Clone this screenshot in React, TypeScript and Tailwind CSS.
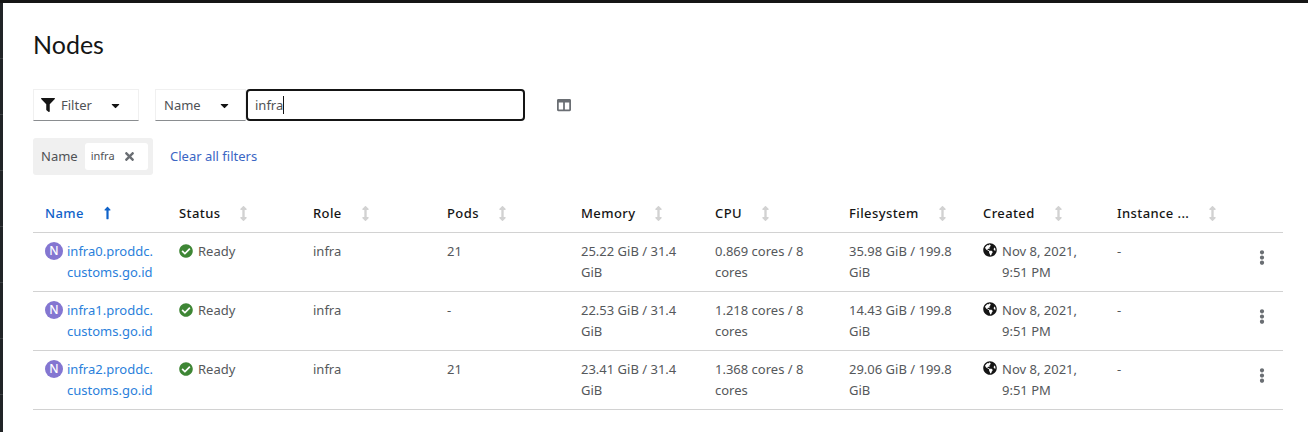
import React from "react";
import { FaFilter, FaCaretDown, FaTimes, FaLongArrowAltUp, FaCheckCircle, FaGlobeAmericas, FaEllipsisV, FaArrowsAltV, FaColumns } from "react-icons/fa";

const columns = ["Status", "Role", "Pods", "Memory", "CPU", "Filesystem", "Created", "Instance ..."];

const nodes = [
  { name: "infra0.proddc.", pods: "21", memory: "25.22 GiB / 31.4 GiB", cpu: "0.869 cores / 8 cores", fs: "35.98 GiB / 199.8 GiB" },
  { name: "infra1.proddc.", pods: "-", memory: "22.53 GiB / 31.4 GiB", cpu: "1.218 cores / 8 cores", fs: "14.43 GiB / 199.8 GiB" },
  { name: "infra2.proddc.", pods: "21", memory: "23.41 GiB / 31.4 GiB", cpu: "1.368 cores / 8 cores", fs: "29.06 GiB / 199.8 GiB" },
];

const navItems = [1, 2, 3, 4, 5, 6, 7, 8];

const App: React.FC = () => {
  return (
    <div className="flex flex-col w-[1308px] h-[432px] overflow-hidden bg-[#151515] font-['Noto_Sans',sans-serif]">
      <div className="h-[3px] shrink-0 bg-[#151515]" />
      <div className="flex flex-1 min-h-0">
        {/* sliver of the collapsed side nav */}
        <div className="w-[3px] shrink-0 bg-[#212427]">
          {navItems.map((i) => (
            <div key={i} className="h-[56px] border-b border-[#3c3f42]" />
          ))}
        </div>
        <div className="flex-1 bg-white pl-[30px] pr-[25px] text-[13px] text-[#151515]">
          <h1 className="pt-[23px] h-[67px] text-[25px] leading-[36px] font-['Lato',sans-serif]">Nodes</h1>

          <div className="mt-[19px] flex items-center h-[32px]">
            <div className="flex items-center w-[106px] h-[32px] border border-[#f0f0f0] border-b-[#8a8d90] pl-[7px]">
              <FaFilter className="w-[14px] h-[14px] mr-[6px]" />
              <span className="pt-[2px] text-[#4f5255]">Filter</span>
              <FaCaretDown className="ml-[17px] w-[13px] h-[13px]" />
            </div>
            <div className="ml-[16px] flex items-center w-[91px] h-[32px] border border-[#f0f0f0] border-b-[#8a8d90] pl-[8px]">
              <span className="pt-[2px] text-[#4f5255]">Name</span>
              <FaCaretDown className="ml-[17px] w-[13px] h-[13px]" />
            </div>
            <div className="flex items-center w-[279px] h-[32px] border-2 border-[#151515] rounded-[4px] pl-[7px]">
              <span className="pt-[2px] text-[#4f5255]">infra</span>
              <span className="w-px h-[18px] bg-[#151515]" />
            </div>
            <FaColumns className="ml-[32px] w-[14px] h-[14px] text-[#6a6e73]" />
          </div>

          <div className="mt-[17px] flex items-center h-[37px]">
            <div className="flex items-center h-[37px] w-[120px] rounded-[3px] bg-[#f0f0f0] pl-[8px]">
              <span className="text-[#4f5255]">Name</span>
              <div className="ml-[7px] flex items-center h-[27px] w-[63px] rounded-[3px] bg-white pl-[6px]">
                <span className="text-[11px] text-[#4f5255]">infra</span>
                <FaTimes className="ml-[8px] w-[13px] h-[13px] text-[#6a6e73]" />
              </div>
            </div>
            <a className="ml-[17px] text-[#3b66c4]">Clear all filters</a>
          </div>

          <table className="mt-[18px] w-[1250px] table-fixed border-collapse">
            <thead>
              <tr className="h-[39px] border-b border-[#d2d2d2]">
                <th className="w-[134px] pl-[12px] pt-[2px] text-left font-medium tracking-[0.4px] text-[#0f62c9]">
                  <span className="inline-flex items-center">
                    Name
                    <FaLongArrowAltUp className="ml-[17px] w-[13px] h-[14px]" />
                  </span>
                </th>
                {columns.map((c) => (
                  <th key={c} className="w-[134px] pl-[12px] pt-[2px] text-left font-medium tracking-[0.4px]">
                    <span className="inline-flex items-center">
                      {c}
                      <FaArrowsAltV className="ml-[17px] w-[13px] h-[15px] text-[#d2d2d2]" />
                    </span>
                  </th>
                ))}
                <th />
              </tr>
            </thead>
            <tbody>
              {nodes.map((n) => (
                <tr key={n.name} className="h-[59px] border-b border-[#d2d2d2] align-top text-[#55585b] leading-[21px]">
                  <td className="pl-[12px] pt-[8px]">
                    <div className="flex">
                      <span className="mt-[1px] flex items-center justify-center shrink-0 w-[18px] h-[18px] rounded-full bg-[#8476d1] text-white text-[12px] font-medium">N</span>
                      <a className="ml-[4px] text-[#2b7fdb]">{n.name}<br />customs.go.id</a>
                    </div>
                  </td>
                  <td className="pl-[12px] pt-[8px]">
                    <div className="flex items-center">
                      <FaCheckCircle className="w-[14px] h-[14px] text-[#3e8635] mr-[5px]" />
                      Ready
                    </div>
                  </td>
                  <td className="pl-[12px] pt-[8px]">infra</td>
                  <td className="pl-[12px] pt-[8px]">{n.pods}</td>
                  <td className="pl-[12px] pr-[12px] pt-[8px]">{n.memory}</td>
                  <td className="pl-[12px] pr-[12px] pt-[8px]">{n.cpu}</td>
                  <td className="pl-[12px] pr-[12px] pt-[8px]">{n.fs}</td>
                  <td className="pl-[12px] pt-[8px]">
                    <div className="flex">
                      <FaGlobeAmericas className="mt-[2px] w-[14px] h-[14px] text-[#151515] mr-[5px] shrink-0" />
                      <span>Nov 8, 2021,<br />9:51 PM</span>
                    </div>
                  </td>
                  <td className="pl-[12px] pt-[8px]">-</td>
                  <td className="pt-[17px]">
                    <FaEllipsisV className="ml-[17px] w-[12px] h-[15px] text-[#6a6e73]" />
                  </td>
                </tr>
              ))}
            </tbody>
          </table>
        </div>
      </div>
    </div>
  );
};

export default App;
